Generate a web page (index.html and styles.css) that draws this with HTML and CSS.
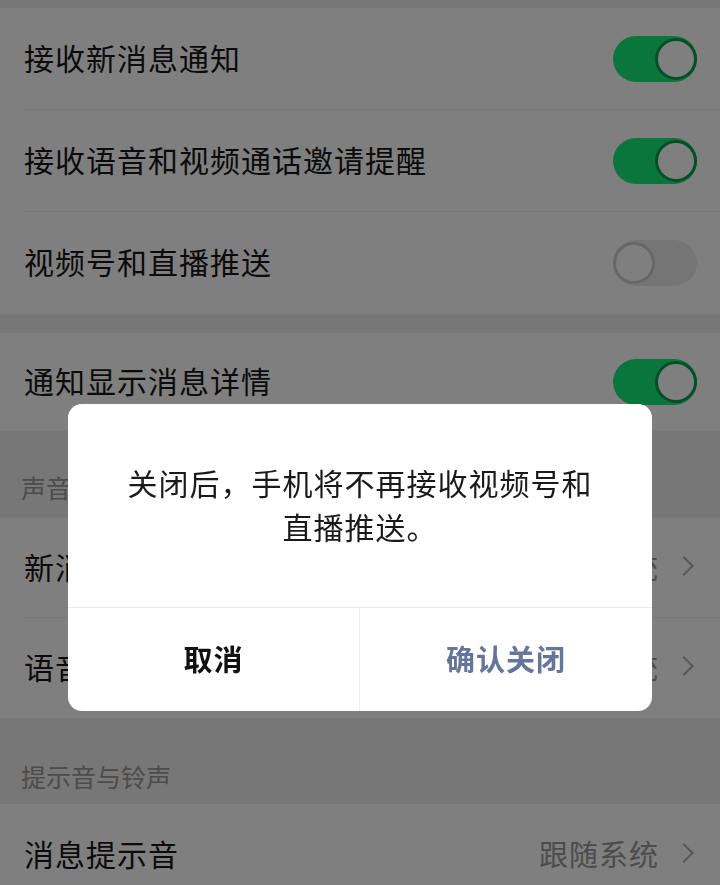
FILE: index.html
```html
<!DOCTYPE html>
<html lang="zh-CN">
<head>
<meta charset="utf-8">
<title>新消息通知</title>
<link rel="stylesheet" href="styles.css">
</head>
<body>
<div class="page">
  <div class="gap gap-top"></div>
  <div class="group">
    <div class="cell">
      <span class="label">接收新消息通知</span>
      <span class="switch on"><span class="knob"></span></span>
    </div>
    <div class="cell">
      <span class="label">接收语音和视频通话邀请提醒</span>
      <span class="switch on"><span class="knob"></span></span>
    </div>
    <div class="cell last">
      <span class="label">视频号和直播推送</span>
      <span class="switch off"><span class="knob"></span></span>
    </div>
  </div>
  <div class="gap gap-mid"></div>
  <div class="group">
    <div class="cell cell4 last">
      <span class="label">通知显示消息详情</span>
      <span class="switch on"><span class="knob"></span></span>
    </div>
  </div>
  <div class="section-title sec1">声音与振动</div>
  <div class="group">
    <div class="cell cell-short">
      <span class="label">新消息提示音</span>
      <span class="value">跟随系统<span class="chev"></span></span>
    </div>
    <div class="cell cell-short last">
      <span class="label">语音和视频通话提示音</span>
      <span class="value">跟随系统<span class="chev"></span></span>
    </div>
  </div>
  <div class="section-title sec2">提示音与铃声</div>
  <div class="group">
    <div class="cell">
      <span class="label">消息提示音</span>
      <span class="value">跟随系统<span class="chev"></span></span>
    </div>
  </div>
</div>

<div class="mask">
  <div class="dialog">
    <div class="dialog-msg">关闭后，手机将不再接收视频号和直播推送。</div>
    <div class="dialog-actions">
      <div class="btn btn-cancel">取消</div>
      <div class="btn btn-confirm">确认关闭</div>
    </div>
  </div>
</div>
</body>
</html>
```
FILE: styles.css
```css
html, body {
  margin: 0;
  padding: 0;
  width: 720px;
  height: 885px;
  overflow: hidden;
  background: #eeeeee;
  font-family: "Noto Sans CJK SC", "Noto Sans", sans-serif;
}

.page {
  display: flex;
  flex-direction: column;
}

.gap-top { height: 8px; }
.gap-mid { height: 19px; }

.group {
  background: #ffffff;
}

.cell {
  height: 102px;
  display: flex;
  align-items: center;
  justify-content: space-between;
  padding: 0 23px 0 24px;
  box-sizing: border-box;
  position: relative;
}

.cell::after {
  content: "";
  position: absolute;
  left: 24px;
  right: 0;
  bottom: 0;
  height: 1px;
  background: #f3f3f3;
}

.cell.last::after { display: none; }

.cell4 { height: 98px; }
.cell-short { height: 100px; }

.label {
  font-size: 30px;
  line-height: 40px;
  color: #161616;
  letter-spacing: 1px;
  margin-bottom: 5px;
}

.value {
  display: flex;
  align-items: center;
  font-size: 29px;
  line-height: 40px;
  color: #999999;
  letter-spacing: 1px;
  margin-bottom: 5px;
}

.chev {
  width: 12px;
  height: 12px;
  border-top: 2.5px solid #b0b0b0;
  border-right: 2.5px solid #b0b0b0;
  transform: rotate(45deg);
  margin-left: 18px;
  margin-right: 6px;
}

.switch {
  width: 84px;
  height: 46px;
  border-radius: 23px;
  box-sizing: border-box;
  display: flex;
  align-items: center;
}

.switch.on {
  background: #14ec78;
  justify-content: flex-end;
}

.switch.off {
  background: #ebebeb;
  justify-content: flex-start;
}

.knob {
  width: 42px;
  height: 42px;
  border-radius: 50%;
  background: #ffffff;
  box-sizing: border-box;
}

.switch.on .knob { border: 3px solid #0c9c50; }
.switch.off .knob { border: 3px solid #cfcfcf; }

.section-title {
  font-size: 25px;
  line-height: 32px;
  color: #999999;
  padding-left: 21px;
  box-sizing: border-box;
  display: flex;
  align-items: flex-end;
}

.sec1 { height: 87px; padding-bottom: 15px; }
.sec2 { height: 86px; padding-bottom: 12px; }

.mask {
  position: fixed;
  inset: 0;
  background: rgba(0, 0, 0, 0.5);
}

.dialog {
  position: absolute;
  left: 68px;
  top: 404px;
  width: 584px;
  background: #ffffff;
  border-radius: 14px;
  overflow: hidden;
}

.dialog-msg {
  padding: 56px 48px 59px;
  font-size: 30px;
  line-height: 44px;
  color: #1a1a1a;
  text-align: center;
  letter-spacing: 1px;
  border-bottom: 1px solid #e8e8e8;
}

.dialog-actions {
  display: grid;
  grid-template-columns: 1fr 1fr;
  height: 103px;
}

.btn {
  display: flex;
  align-items: center;
  justify-content: center;
  font-size: 29px;
  line-height: 40px;
  font-weight: 700;
  letter-spacing: 1px;
  padding-bottom: 4px;
}

.btn-cancel {
  color: #111111;
  border-right: 1px solid #ececec;
}

.btn-confirm {
  color: #66759a;
  font-weight: 700;
}
```
